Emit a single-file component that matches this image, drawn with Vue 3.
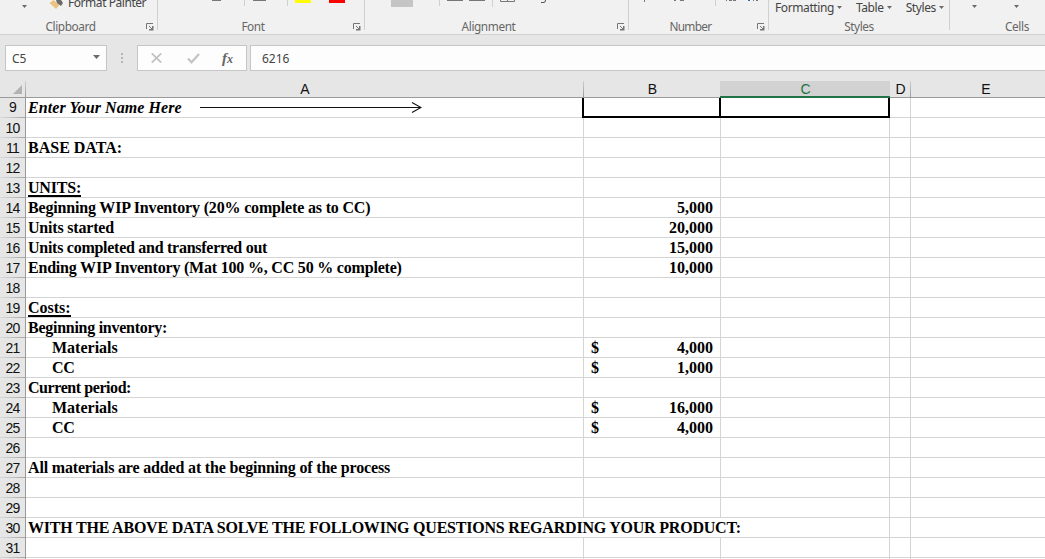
<template>
  <div class="excel">
    <div class="ribbon">
      <div v-for="g in groups" :key="g.name" class="group" :class="g.name.toLowerCase()">
        <div class="tools">
          <template v-if="g.name === 'Clipboard'">
            <svg width="68" height="17" viewBox="0 0 68 17">
              <path d="M22 5h5l-2.500 3z" fill="#6a6a6a" />
              <path d="M49.500 3l4-3 6 5-3.500 4z" fill="#eac282" />
              <path d="M56 0h5l2 3-2 3-4-3z" fill="#6a6a6a" />
            </svg>
            <span class="painter">Format Painter</span>
          </template>
          <svg v-else-if="g.name === 'Font'" width="206" height="17" viewBox="158 0 206 17">
            <path d="M212 .5h9M253 .5h13" stroke="#777" />
            <path d="M244.500 0v6M287.500 0v6" stroke="#d0d0d0" />
            <path d="M295 0h16v3h-16z" fill="#ffff00" />
            <path d="M329 0h16v3h-16z" fill="#ff0000" />
          </svg>
          <svg v-else-if="g.name === 'Alignment'" width="263" height="17" viewBox="365 0 263 17">
            <path d="M391 0h22v7h-22z" fill="#c5c5c5" />
            <path d="M439.500 0v6M492.500 0v7" stroke="#d0d0d0" />
            <path d="M447 .5h16M469 .5h16M500.500 0v1.500h14v-1.500M507.500 0v1" fill="none" stroke="#777" />
            <path d="M541 2.500h3q1.500 0 1.500-2.500" fill="none" stroke="#555" />
          </svg>
          <svg v-else-if="g.name === 'Number'" width="139" height="17" viewBox="629 0 139 17">
            <path d="M644.500 0v2M674 .5h2M680 .5h4" stroke="#777" />
            <path d="M715.500 0v6" stroke="#d0d0d0" />
            <path d="M726 .5h1M729 .5h3M733 .5h3M753 .5h1M756 .5h2" stroke="#777" />
            <path d="M748 .5h2" stroke="#2b6cc4" />
          </svg>
          <template v-else-if="g.name === 'Styles'">
            <span v-for="s in ['Formatting', 'Table', 'Styles']" :key="s" class="drop">
              <span>{{ s }}</span>
              <svg width="5" height="3" viewBox="0 0 5 3"><path d="M0 0h5l-2.500 3z" fill="#6a6a6a" /></svg>
            </span>
          </template>
          <svg v-else width="95" height="17" viewBox="950 0 95 17">
            <path d="M972 5h5l-2.500 3zM1014 5h5l-2.500 3z" fill="#6a6a6a" />
          </svg>
        </div>
        <div class="caption">{{ g.name }}</div>
        <svg v-if="g.launcher" class="launcher" width="8" height="8" viewBox="0 0 8 8">
          <path d="M.5 6V.5H7M3 3l3 3" fill="none" stroke="#777" />
          <path d="M7.500 3v4.500H3V6h2l1-1V3z" fill="#777" />
        </svg>
      </div>
    </div>

    <div class="formula-bar">
      <div class="name-box">
        <span>C5</span>
        <svg width="7" height="4" viewBox="0 0 7 4"><path d="M0 0h7l-3.500 4z" fill="#6a6a6a" /></svg>
      </div>
      <div class="dots"><i></i><i></i><i></i></div>
      <div class="actions">
        <svg width="11" height="10" viewBox="0 0 11 10">
          <path d="M.8.5l9.400 9M10.200.5l-9.400 9" fill="none" stroke="#bebebe" stroke-width="1.700" />
        </svg>
        <svg width="13" height="11" viewBox="0 0 13 11">
          <path d="M1 5.500l3.500 3.700L12 1" fill="none" stroke="#c4c4c4" stroke-width="2.300" />
        </svg>
        <span class="fx">f<small>x</small></span>
      </div>
      <div class="formula">6216</div>
    </div>

    <div class="sheet">
      <div class="row head">
        <div class="corner">
          <svg width="9" height="9" viewBox="0 0 9 9"><path d="M9 0v9H0z" fill="#b2b2b2" /></svg>
        </div>
        <div v-for="c in columns" :key="c" class="col" :class="['col-' + c, { active: c === 'C' }]">{{ c }}</div>
      </div>
      <div v-for="r in rows" :key="r.n" class="row" :class="{ first: r.n === 9 }">
        <div class="num">{{ r.n }}</div>
        <div class="cell a" :class="[r.kind, { wide: r.wide }]">
          <span class="text" :style="{ letterSpacing: (r.track || 0) + 'px' }">{{ r.a }}</span>
          <svg v-if="r.n === 9" class="arrow" width="222" height="11" viewBox="0 0 222 11">
            <path d="M0 5.500h220M212 .5l9 5-9 5" fill="none" stroke="#111" stroke-width="1.100" />
          </svg>
        </div>
        <template v-if="!r.wide">
          <div class="cell b" :class="{ boxed: r.n === 9 }">
            <span>{{ r.cur }}</span>
            <span>{{ r.b }}</span>
          </div>
          <div class="cell c" :class="{ boxed: r.n === 9 }"></div>
        </template>
        <div class="cell"></div>
        <div class="cell last"></div>
      </div>
      <div class="row">
        <div class="num"></div>
        <div v-for="c in columns" :key="c" class="cell"></div>
      </div>
    </div>
  </div>
</template>

<script setup>
const groups = [
  { name: 'Clipboard', launcher: true },
  { name: 'Font', launcher: true },
  { name: 'Alignment', launcher: true },
  { name: 'Number', launcher: true },
  { name: 'Styles' },
  { name: 'Cells' }
]

const columns = ['A', 'B', 'C', 'D', 'E']

// track: letter spacing of the label in px
const content = {
  9: { a: 'Enter Your Name Here', kind: 'name', track: 0.08 },
  11: { a: 'BASE DATA:' },
  13: { a: 'UNITS:', kind: 'under', track: -0.2 },
  14: { a: 'Beginning WIP Inventory (20% complete as to CC)', track: -0.17, b: '5,000' },
  15: { a: 'Units started', track: -0.19, b: '20,000' },
  16: { a: 'Units completed and transferred out', track: -0.27, b: '15,000' },
  17: { a: 'Ending WIP Inventory (Mat 100 %, CC 50 % complete)', track: -0.2, b: '10,000' },
  19: { a: 'Costs:', kind: 'under' },
  20: { a: 'Beginning inventory:', track: -0.27 },
  21: { a: 'Materials', kind: 'indent', cur: '$', b: '4,000' },
  22: { a: 'CC', kind: 'indent', track: -0.4, cur: '$', b: '1,000' },
  23: { a: 'Current period:', track: -0.43 },
  24: { a: 'Materials', kind: 'indent', cur: '$', b: '16,000' },
  25: { a: 'CC', kind: 'indent', track: -0.4, cur: '$', b: '4,000' },
  27: { a: 'All materials are added at the beginning of the process', track: -0.17 },
  30: {
    a: 'WITH THE ABOVE DATA SOLVE THE FOLLOWING QUESTIONS REGARDING YOUR PRODUCT:',
    track: -0.21,
    wide: true
  }
}

const rows = Array.from({ length: 23 }, (_, i) => ({ n: i + 9, ...content[i + 9] }))
</script>

<style>
body {
  margin: 0;
  overflow: hidden;
}
</style>

<style scoped>
.excel {
  width: 1045px;
  height: 559px;
  overflow: hidden;
  background: #fff;
  font-family: "Noto Sans", "Open Sans", sans-serif;
  font-size: 12px;
  color: #444;
}

svg {
  display: block;
  flex: none;
}

.ribbon {
  display: grid;
  grid-template-columns: 158px 207px 264px 140px 181px 1fr;
  height: 34px;
  background: #f1f1f1;
  border-bottom: 1px solid #d2d2d2;
}

.group {
  position: relative;
  height: 30px;
  box-sizing: border-box;
  border-right: 1px solid #d0d0d0;
}

.group:last-child {
  border-right: none;
}

.tools {
  display: flex;
  height: 17px;
}

.painter {
  line-height: 16px;
  margin-top: -5px;
  height: 16px;
  white-space: nowrap;
  letter-spacing: -0.45px;
}

.styles .tools {
  padding-left: 6px;
  gap: 14px;
}

.drop {
  display: flex;
  align-items: center;
  gap: 3px;
  height: 14px;
  letter-spacing: -0.4px;
}

.caption {
  padding-right: 16px;
  font-size: 11.8px;
  line-height: 18px;
  letter-spacing: -0.4px;
  text-align: center;
  color: #666;
}

.number .caption {
  letter-spacing: -0.65px;
}

.styles .caption {
  padding-right: 0;
}

.cells .caption {
  padding-left: 39px;
  padding-right: 0;
}

.launcher {
  position: absolute;
  right: 3px;
  bottom: -1px;
}

.formula-bar {
  display: flex;
  height: 46px;
  padding: 10px 0 10px 5px;
  box-sizing: border-box;
  background: #e6e6e6;
}

.name-box,
.actions,
.formula {
  display: flex;
  align-items: center;
  box-sizing: border-box;
  height: 26px;
  border: 1px solid #c6c6c6;
  background: #fdfdfd;
}

.name-box {
  width: 102px;
  padding: 0 6px;
  justify-content: space-between;
}

.name-box svg {
  margin-bottom: 2px;
}

.dots {
  display: flex;
  flex-direction: column;
  justify-content: center;
  gap: 2px;
  width: 2px;
  margin: 0 14px;
}

.dots i {
  height: 2px;
  background: #b5b5b5;
}

.actions {
  width: 110px;
  padding-left: 13px;
  gap: 25px;
}

.fx {
  margin-left: -3px;
  font: italic bold 15px/20px "Liberation Serif", serif;
  color: #666;
}

.fx small {
  font-size: 12px;
}

.formula {
  flex: 1;
  margin-left: 3px;
  padding-left: 11px;
  border-right: none;
}

.row {
  display: grid;
  grid-template-columns: 26px 558px 137px 169px 21px 1fr;
  grid-template-rows: 100%;
  height: 20px;
}

.head {
  height: 17px;
  background: #e6e6e6;
  font: 14px/16px "Liberation Sans", Arial, sans-serif;
  color: #111;
}

.head > div {
  box-sizing: border-box;
  border-bottom: 1px solid #9a9a9a;
  background: linear-gradient(#d0d0d0, #9a9a9a) right / 1px 100% no-repeat;
}

.corner {
  padding: 4px 3px 0 13px;
}

.col {
  text-align: center;
}

.head > .col-E {
  padding-left: 16px;
  background: none;
}

.head > .active {
  position: relative;
  margin-left: -1px;
  padding-left: 1px;
  background: #d2d2d2;
  border-bottom: 2px solid #217346;
  color: #217346;
}

.num {
  box-sizing: border-box;
  border-right: 1px solid #9a9a9a;
  background: linear-gradient(90deg, #dadada, #a6a6a6) bottom / 100% 1px no-repeat #e6e6e6;
  font: 14px/20px "Liberation Sans", Arial, sans-serif;
  letter-spacing: -0.8px;
  text-align: center;
  color: #111;
}

.first .num {
  line-height: 18px;
}

.cell {
  box-sizing: border-box;
  min-width: 0;
  border-right: 1px solid #d4d4d4;
  border-bottom: 1px solid #d4d4d4;
  font: bold 16px/20px "Liberation Serif", "Times New Roman", serif;
  white-space: nowrap;
  color: #000;
}

.last,
.cell:last-child {
  border-right: none;
}

.a {
  display: flex;
  align-items: flex-start;
  padding-left: 2px;
}

.wide {
  grid-column: 2 / 5;
}

.name {
  font-style: italic;
}

.name .text {
  line-height: 19px;
}

.arrow {
  margin: 4px 0 0 18px;
}

.under .text {
  height: 17px;
  border-bottom: 2px solid #000;
}

.indent {
  padding-left: 26px;
}

.b {
  display: flex;
  justify-content: space-between;
  padding: 0 7px;
}

.boxed {
  position: relative;
  margin-left: -2px;
  border-left: 2px solid #000;
  border-bottom: 2px solid #000;
}

.c.boxed {
  border-right: 2px solid #000;
}
</style>
